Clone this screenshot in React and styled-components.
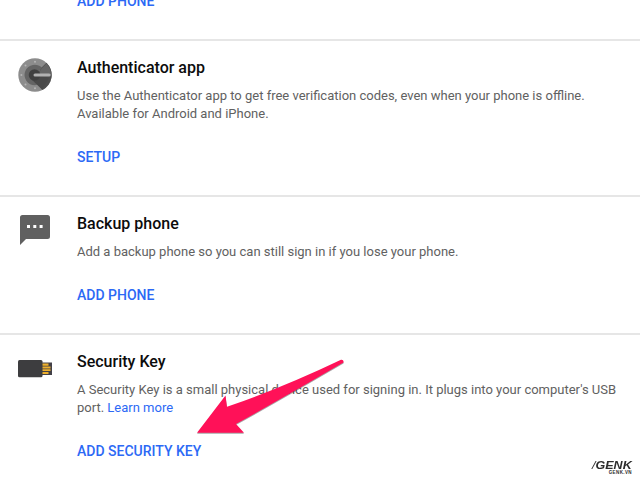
import React from "react";
import styled, { createGlobalStyle } from "styled-components";

const GlobalStyle = createGlobalStyle`
  * { box-sizing: border-box; }
  body {
    margin: 0;
    background: #fff;
    font-family: Roboto, "Noto Sans", sans-serif;
    overflow: hidden;
  }
`;

const Page = styled.main`
  position: relative;
  width: 640px;
  height: 480px;
  overflow: hidden;
  background: #fff;
`;

const PreviousSection = styled.div`
  height: 39px;
  padding-left: 77px;
  overflow: hidden;
`;

const Section = styled.section`
  display: grid;
  grid-template-columns: 77px 1fr;
  height: ${(p) => p.$height}px;
  border-top: 2px solid #e6e6e6;
`;

const IconCell = styled.div`
  padding: ${(p) => p.$top}px 0 0 17px;
  line-height: 0;
`;

const Content = styled.div`
  padding-top: 17px;
`;

const Title = styled.h2`
  margin: 0;
  font-size: 16px;
  line-height: 20px;
  font-weight: 500;
  color: #0c0c0c;
`;

const Description = styled.p`
  margin: 9px 0 0;
  font-size: 13px;
  line-height: 18px;
  color: #616161;
  white-space: nowrap;
`;

const Link = styled.a`
  color: #2c69f5;
`;

const Action = styled.button`
  display: block;
  margin: ${(p) => p.$top}px 0 0;
  padding: 0;
  border: 0;
  background: none;
  font: 500 14px/20px Roboto, "Noto Sans", sans-serif;
  color: #2c69f5;
`;

const Arrow = styled.svg`
  position: absolute;
  left: 190px;
  top: 350px;
  filter: drop-shadow(0 1px 0.5px rgba(0, 0, 0, 0.35));
`;

const Watermark = styled.div`
  position: absolute;
  right: 8px;
  bottom: 5px;
  display: flex;
  flex-direction: column;
  align-items: flex-end;
  color: #2c2c2c;
  font-family: "Liberation Sans", Arial, sans-serif;
  font-weight: 700;
`;

const Brand = styled.div`
  display: flex;
  font-size: 10px;
  line-height: 9px;
  font-style: italic;
  transform: scaleX(1.25);
  transform-origin: right;
`;

const Domain = styled.div`
  font-size: 4.5px;
  line-height: 5px;
  letter-spacing: 0.4px;
`;

const Slash = styled.span`
  font-weight: 400;
`;

function AuthenticatorIcon() {
  return (
    <svg width="36" height="36" viewBox="0 0 36 36">
      <circle cx="18" cy="18" r="16.7" fill="#8c8c8c" />
      <path d="M29.4 5.8A16.7 16.7 0 0 1 25.5 32.9L18 22 23.5 11.7Z" fill="#4d4d4d" />
      <path d="M25.2 10.8A10.3 10.3 0 1 0 18 28.3L22 27 18 18Z" fill="#646464" />
      <path d="M25.2 10.8 29.4 6.6A16 16 0 0 1 34 18H20Z" fill="#666" />
      <path d="M14 22 25 32.5 32 21 20 18Z" fill="#494949" />
      <circle cx="17.5" cy="18" r="5.8" fill="#404040" />
      <path d="M18 18H32.2" stroke="#b2b2b2" strokeWidth="3" strokeLinecap="round" />
      <g fill="#b5b5b5">
        <circle cx="18" cy="4.7" r="1" />
        <circle cx="8.5" cy="8.6" r="1" />
        <circle cx="4.4" cy="18" r="1" />
        <circle cx="8.5" cy="27.5" r="1" />
        <circle cx="18" cy="31.3" r="1" />
      </g>
    </svg>
  );
}

function MessageIcon() {
  return (
    <svg width="36" height="32" viewBox="0 0 36 32">
      <path d="M5.5 1H30.5Q33 1 33 3.5V22.5Q33 25 30.5 25H9L3 31V3.5Q3 1 5.5 1Z" fill="#606060" />
      <path d="M10 11h3v3h-3zM16.3 11h3v3h-3zM22.6 11h3v3h-3z" fill="#fff" />
    </svg>
  );
}

function SecurityKeyIcon() {
  return (
    <svg width="36" height="20" viewBox="0 0 36 20">
      <path d="M25 3.5H35V16H25Z" fill="#424047" />
      <path d="M25 4.5H31.5V6.7H25ZM25 7.6H33.5V9.4H25ZM25 10.3H33.5V12.1H25ZM25 13H31.5V15H25Z" fill="#edb02d" />
      <rect x="1" y="1" width="24.5" height="17.3" rx="1.5" fill="#3d3d3f" />
    </svg>
  );
}

export default function App() {
  return (
    <>
      <GlobalStyle />
      <Page>
        <PreviousSection>
          <Action $top={-9}>ADD PHONE</Action>
        </PreviousSection>
        <Section $height={156}>
          <IconCell $top={15.5}><AuthenticatorIcon /></IconCell>
          <Content>
            <Title>Authenticator app</Title>
            <Description>
              Use the Authenticator app to get free verification codes, even when your phone is offline.
              <br />
              Available for Android and iPhone.
            </Description>
            <Action $top={24}>SETUP</Action>
          </Content>
        </Section>
        <Section $height={138}>
          <IconCell $top={17}><MessageIcon /></IconCell>
          <Content>
            <Title>Backup phone</Title>
            <Description>Add a backup phone so you can still sign in if you lose your phone.</Description>
            <Action $top={24}>ADD PHONE</Action>
          </Content>
        </Section>
        <Section $height={147}>
          <IconCell $top={24}><SecurityKeyIcon /></IconCell>
          <Content>
            <Title>Security Key</Title>
            <Description>
              A Security Key is a small physical device used for signing in. It plugs into your computer's USB
              <br />
              port. <Link>Learn more</Link>
            </Description>
            <Action $top={24}>ADD SECURITY KEY</Action>
          </Content>
        </Section>
        <Arrow width="164" height="94" viewBox="190 350 164 94">
          <path d="M197 432.7 225.5 395.5 227 406.8 Q282 388 341 359.8 Q344 359.5 343.5 362.5 Q290 394 236 424L244 432.7Z" fill="#ff1158" />
        </Arrow>
        <Watermark>
          <Brand><Slash>/</Slash>GENK</Brand>
          <Domain>GENK.VN</Domain>
        </Watermark>
      </Page>
    </>
  );
}
